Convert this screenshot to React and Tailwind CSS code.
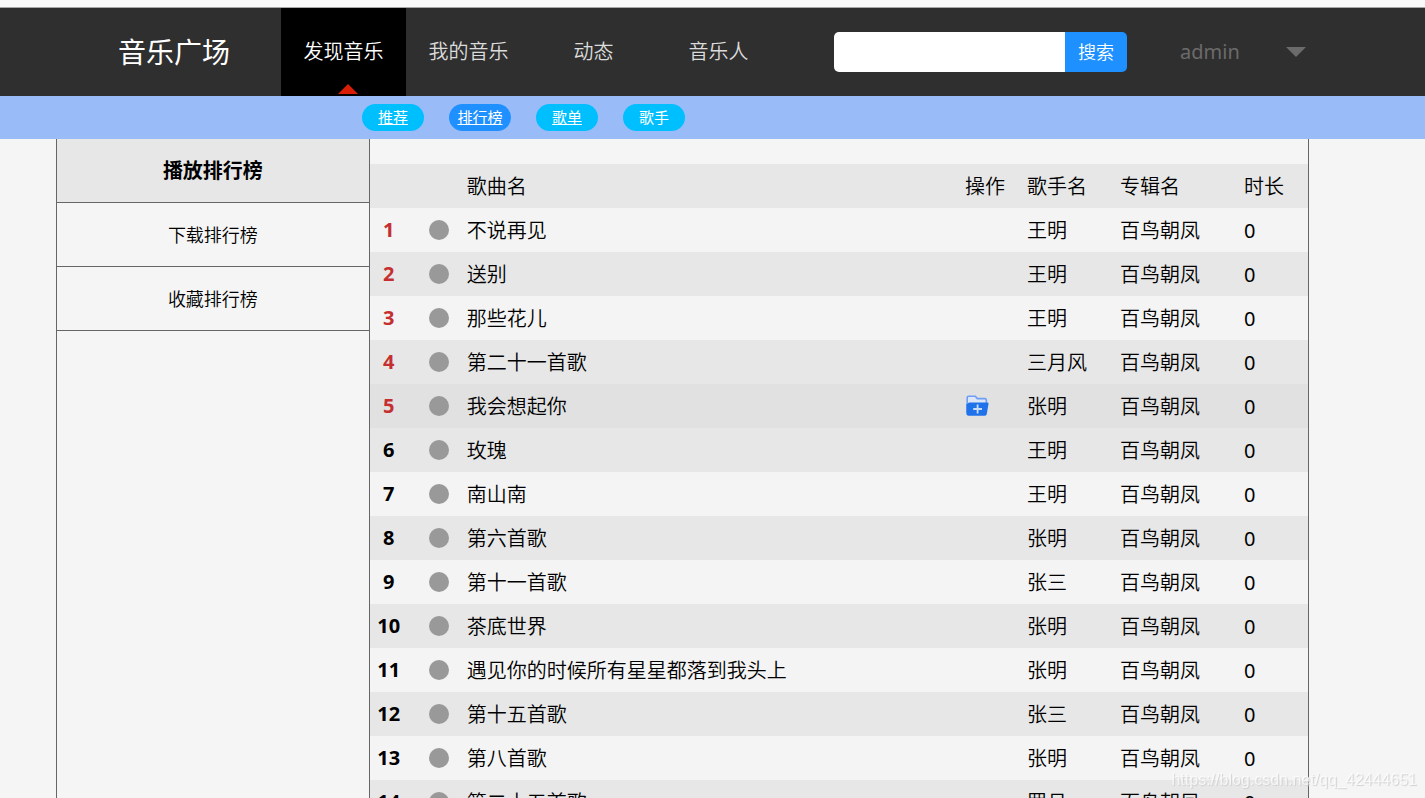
import React, { useState } from 'react';

const NAV = ['发现音乐', '我的音乐', '动态', '音乐人'];

const TABS = [
  { name: '推荐', underline: true },
  { name: '排行榜', underline: true },
  { name: '歌单', underline: true },
  { name: '歌手', underline: false },
];

const CHARTS = ['播放排行榜', '下载排行榜', '收藏排行榜'];

const SONGS = [
  { name: '不说再见', singer: '王明' },
  { name: '送别', singer: '王明' },
  { name: '那些花儿', singer: '王明' },
  { name: '第二十一首歌', singer: '三月风' },
  { name: '我会想起你', singer: '张明' },
  { name: '玫瑰', singer: '王明' },
  { name: '南山南', singer: '王明' },
  { name: '第六首歌', singer: '张明' },
  { name: '第十一首歌', singer: '张三' },
  { name: '茶底世界', singer: '张明' },
  { name: '遇见你的时候所有星星都落到我头上', singer: '张明' },
  { name: '第十五首歌', singer: '张三' },
  { name: '第八首歌', singer: '张明' },
  { name: '第二十五首歌', singer: '罗月' },
];

function AddFolderIcon() {
  return (
    <svg viewBox="0 0 24 24" className="block size-6" aria-hidden="true">
      <path
        d="M2.2 19V3.6c0-.9.6-1.4 1.5-1.4h6.6l2 2.4h7.6c.9 0 1.4.6 1.4 1.4V9"
        fill="#dde6f8"
        stroke="#6f9ff4"
        strokeWidth="1.6"
      />
      <path
        d="M4.2 8.4h18c1 0 1.5.7 1.3 1.6l-1.7 9.8c-.2 1.2-.9 1.9-2 1.9H3.5c-1.3 0-2.1-.8-2.1-2.1V10c1.6.2 1.9-1.6 2.8-1.6z"
        fill="#1f72ea"
      />
      <path d="M12.6 10.6v8.8M8.2 15h8.8" stroke="#c9dcfb" strokeWidth="1.8" />
    </svg>
  );
}

function Header() {
  return (
    <header className="flex h-22 shrink-0 items-center bg-[#2f2f2f] pl-[118px]">
      <h1 className="mr-[51px] text-[28px] leading-10 text-white">音乐广场</h1>

      <nav className="flex h-full">
        {NAV.map((item, i) => (
          <a
            key={item}
            href="#"
            className={
              i === 0
                ? 'relative flex w-[125px] items-center justify-center bg-black text-xl font-[350] text-white'
                : 'flex w-[125px] items-center justify-center text-xl font-[350] text-[#dcdcdc]'
            }
          >
            {item}
            {i === 0 && (
              <svg
                viewBox="0 0 20 10"
                className="absolute bottom-0.5 left-[57px] h-2.5 w-5"
                aria-hidden="true"
              >
                <path d="M10 0L20 10H0z" fill="#d81e06" />
              </svg>
            )}
          </a>
        ))}
      </nav>

      <form className="ml-[53px] flex h-10" onSubmit={(e) => e.preventDefault()}>
        <input
          type="text"
          aria-label="搜索"
          className="w-[231px] rounded-l-[5px] bg-white px-3 text-lg text-black outline-none"
        />
        <button
          type="submit"
          className="w-[62px] rounded-r-[5px] bg-[#1e90ff] text-lg font-[350] text-white"
        >
          搜索
        </button>
      </form>

      <button
        type="button"
        className="ml-[53px] flex items-center gap-[46px] text-xl text-[#6b6b6b]"
      >
        admin
        <svg viewBox="0 0 20 10" className="h-2.5 w-5" aria-hidden="true">
          <path d="M0 0H20L10 10z" fill="#6b6b6b" />
        </svg>
      </button>
    </header>
  );
}

function SongRow({ song, index, active }) {
  return (
    <tr
      className={
        active
          ? 'h-11 bg-[#e1e1e1]'
          : 'h-11 odd:bg-[#f4f4f4] even:bg-[#e7e7e7]'
      }
    >
      <td
        className={
          index < 5
            ? 'text-center font-bold text-[#c52f30]'
            : 'text-center font-bold'
        }
      >
        {index + 1}
      </td>
      <td className="pl-[21px]">
        <button
          type="button"
          aria-label="播放"
          className="block size-5 rounded-full bg-[#999999]"
        />
      </td>
      <td className="pt-0.5 font-[350]">{song.name}</td>
      <td>
        {active && (
          <button type="button" aria-label="收藏" className="block">
            <AddFolderIcon />
          </button>
        )}
      </td>
      <td className="pt-0.5 font-[350]">{song.singer}</td>
      <td className="pt-0.5 font-[350]">百鸟朝凤</td>
      <td className="pt-0.5">0</td>
    </tr>
  );
}

export default function App() {
  const [chart, setChart] = useState(0);

  return (
    <div className="flex h-screen flex-col overflow-hidden bg-[#f5f5f5] font-['Noto_Sans','Noto_Sans_CJK_SC',sans-serif] text-black">
      <div className="h-2 shrink-0 border-b border-[#a8a8a8] bg-[#fafafa]" />
      <Header />

      <nav className="flex h-[43px] shrink-0 items-center gap-[25px] bg-[#99bbf8] pl-[362px]">
        {TABS.map((tab, i) => (
          <a
            key={tab.name}
            href="#"
            className={`flex h-[27px] w-[62px] items-center justify-center rounded-full text-[15px] text-white ${
              i === 1 ? 'bg-[#1e90ff]' : 'bg-[#00bfff]'
            } ${tab.underline ? 'underline' : ''}`}
          >
            {tab.name}
          </a>
        ))}
      </nav>

      <main className="mr-[116px] ml-14 flex min-h-0 flex-1 border-x border-[#666666]">
        <aside className="w-1/4 shrink-0 border-r border-[#666666]">
          {CHARTS.map((name, i) => (
            <button
              key={name}
              type="button"
              onClick={() => setChart(i)}
              className={
                chart === i
                  ? 'block h-16 w-full border-b border-[#666666] bg-[#e7e7e7] text-xl font-bold'
                  : 'block h-16 w-full border-b border-[#666666] text-lg font-[350]'
              }
            >
              {name}
            </button>
          ))}
        </aside>

        <section className="min-w-0 flex-1 pt-[25px]">
          <table className="w-full table-fixed text-left text-xl">
            <colgroup>
              <col className="w-[38px]" />
              <col className="w-[59px]" />
              <col />
              <col className="w-[62px]" />
              <col className="w-[93px]" />
              <col className="w-[124px]" />
              <col className="w-16" />
            </colgroup>
            <thead>
              <tr className="h-11 bg-[#e7e7e7]">
                <td />
                <td />
                <th className="pt-0.5 font-[350]">歌曲名</th>
                <th className="pt-0.5 font-[350]">操作</th>
                <th className="pt-0.5 font-[350]">歌手名</th>
                <th className="pt-0.5 font-[350]">专辑名</th>
                <th className="pt-0.5 font-[350]">时长</th>
              </tr>
            </thead>
            <tbody>
              {SONGS.map((song, i) => (
                <SongRow key={song.name} song={song} index={i} active={i === 4} />
              ))}
            </tbody>
          </table>
        </section>
      </main>

      <p className="pointer-events-none fixed right-2 bottom-2 font-['Liberation_Sans',sans-serif] text-base leading-5 text-white/70 [text-shadow:1px_1px_1px_#d0d0d0]">
        https://blog.csdn.net/qq_42444651
      </p>
    </div>
  );
}
